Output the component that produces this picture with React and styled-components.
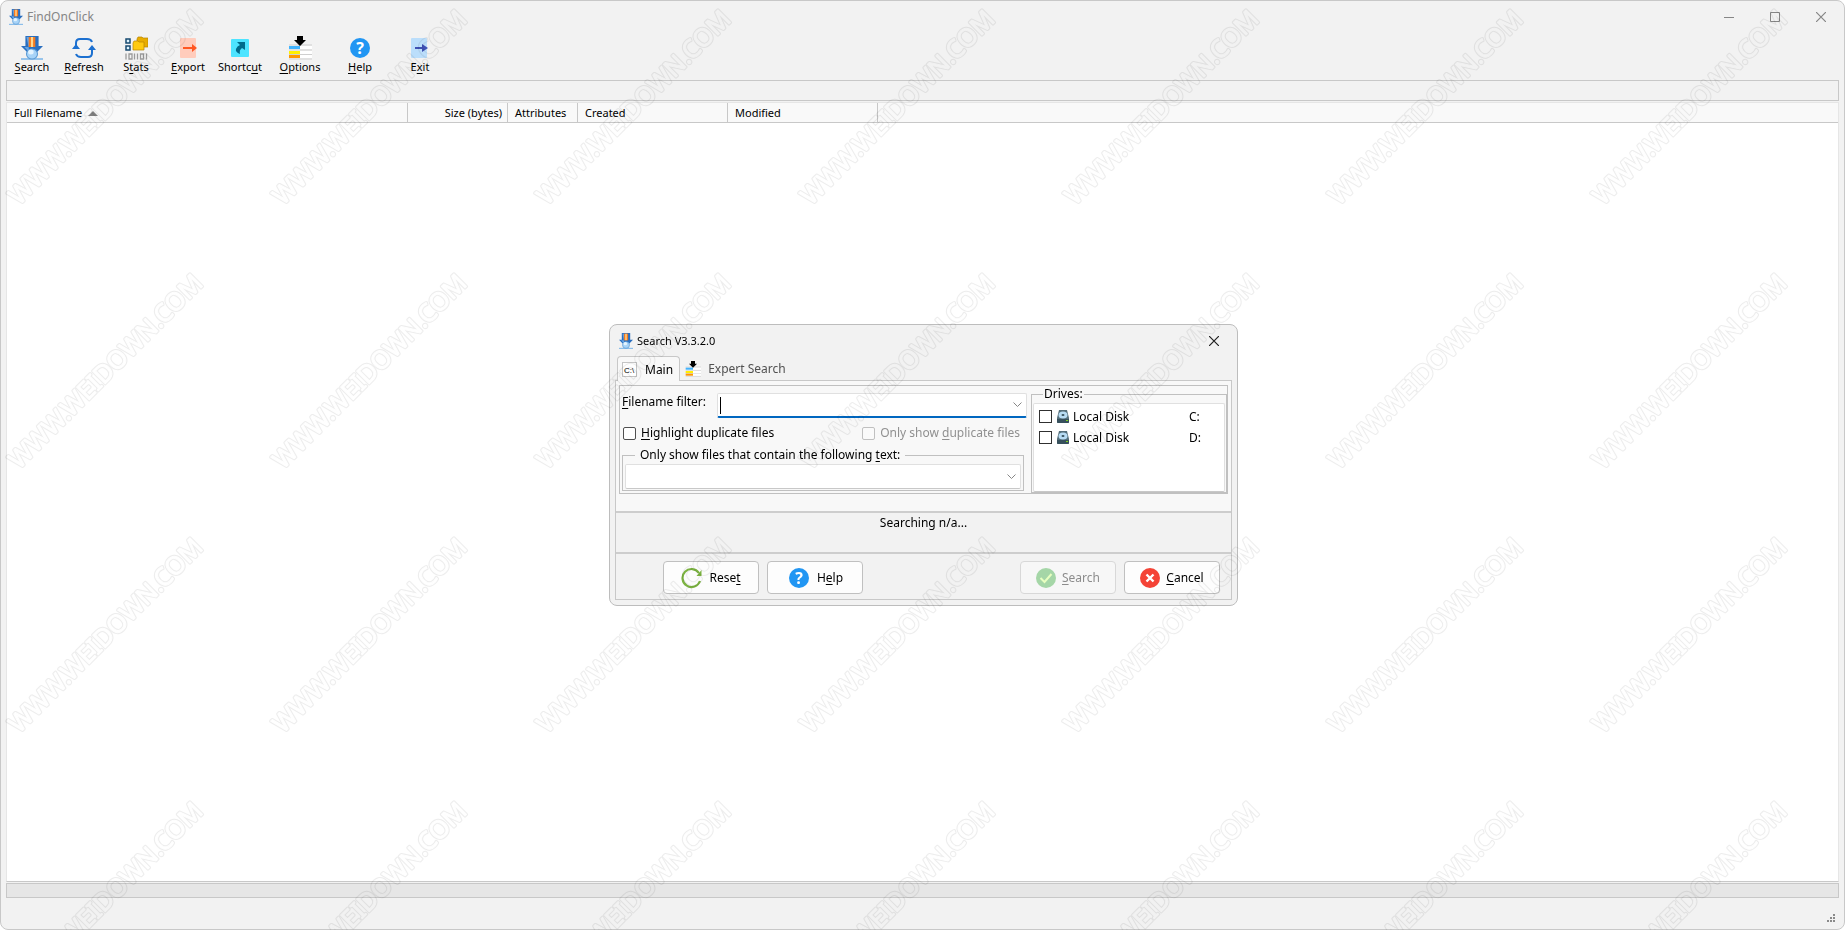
import React from "react";
import styled, { createGlobalStyle } from "styled-components";

const GlobalStyle = createGlobalStyle`
  * {
    box-sizing: border-box;
  }
  body {
    margin: 0;
    background: #fff;
    color: #000;
    font-family: "Noto Sans", "Open Sans", sans-serif;
    font-size: 11px;
    line-height: 16px;
  }
  button, input {
    font: inherit;
    color: inherit;
    margin: 0;
    padding: 0;
  }
  svg {
    display: block;
    flex: none;
  }
  u {
    text-underline-offset: 2px;
    text-decoration-skip-ink: none;
  }
`;

const Window = styled.main`
  display: flex;
  flex-direction: column;
  min-height: 100vh;
  padding: 0 5px;
  border: 1px solid #c8c8c8;
  border-radius: 8px;
  background: #f2f2f2;
`;

const TitleBar = styled.header`
  display: flex;
  align-items: center;
  justify-content: space-between;
  height: 31px;
  margin-right: -5px;
  padding-left: 3px;
  color: #868686;
`;

const AppTitle = styled.h1`
  display: flex;
  align-items: center;
  gap: 4px;
  margin: 0;
  font-size: 12px;
  font-weight: 400;
`;

const WindowButtons = styled.div`
  display: flex;
`;

const WindowButton = styled.button`
  display: flex;
  align-items: center;
  justify-content: center;
  width: 46px;
  height: 30px;
  border: 0;
  background: transparent;
  color: ${props => props.$color || "#868686"};
`;

const Toolbar = styled.nav`
  display: flex;
  height: 48px;
`;

const ToolButton = styled.button`
  display: flex;
  flex-direction: column;
  align-items: center;
  width: ${props => (props.$wide ? 60 : 52)}px;
  margin-left: ${props => props.$gap || 0}px;
  padding-top: 4px;
  border: 0;
  background: transparent;
  line-height: 14px;
`;

const PathBar = styled.div`
  height: 21px;
  border: 1px solid #c8c8c8;
`;

const ListView = styled.section`
  flex: 1;
  margin-top: 1px;
  border: 1px solid #e6e6e6;
  border-bottom-color: #c8c8c8;
  background: #fff;
`;

const FileTable = styled.table`
  width: 100%;
  table-layout: fixed;
  border-collapse: separate;
  border-spacing: 0;
  background: #f9f9f9;
`;

const HeadCell = styled.th`
  width: ${props => (props.$width ? `${props.$width}px` : "auto")};
  height: 20px;
  padding: 0 5px 0 7px;
  border-right: ${props => (props.$width ? "1px solid #c8c8c8" : 0)};
  border-bottom: 1px solid #c8c8c8;
  font-weight: 400;
  text-align: ${props => props.$align || "left"};
`;

const SortArrow = styled.span`
  display: inline-block;
  margin-left: 6px;
  border: 5px solid transparent;
  border-top: 0;
  border-bottom-color: #808080;
  vertical-align: 1px;
`;

const ProgressTrack = styled.div`
  height: 15px;
  margin-top: 1px;
  border: 1px solid #c8c8c8;
  background: #e6e6e6;
`;

const StatusBar = styled.footer`
  display: flex;
  align-items: flex-end;
  justify-content: flex-end;
  height: 31px;
  padding: 7px 4px;
`;

const Overlay = styled.div`
  position: fixed;
  inset: 0;
  display: flex;
  align-items: center;
  justify-content: center;
  padding-left: 2px;
`;

const Dialog = styled.section`
  width: 629px;
  padding: 0 5px 5px;
  border: 1px solid #bdbdbd;
  border-radius: 8px;
  background: #f2f2f2;
  font-size: 12px;
  line-height: 18px;
`;

const DialogBar = styled.header`
  display: flex;
  align-items: center;
  justify-content: space-between;
  height: 31px;
  margin-right: -5px;
  padding-left: 4px;
`;

const DialogTitle = styled.h2`
  display: flex;
  align-items: center;
  gap: 4px;
  margin: 0;
  font-size: 11px;
  font-weight: 400;
`;

const Tabs = styled.div`
  display: flex;
  height: 24px;
  padding-left: 2px;
`;

const Tab = styled.button`
  display: flex;
  align-items: center;
  gap: 7px;
  height: ${props => (props.$active ? 25 : 24)}px;
  padding: 1px 6px 0 4px;
  border: 1px solid ${props => (props.$active ? "#c8c8c8" : "transparent")};
  border-bottom: 0;
  border-radius: 4px 4px 0 0;
  background: ${props => (props.$active ? "#f8f8f8" : "transparent")};
  color: ${props => (props.$active ? "#000" : "#505050")};
  z-index: 1;
`;

const Body = styled.div`
  border: 1px solid #c8c8c8;
`;

const TabPanel = styled.div`
  padding: 4px 3px 17px;
  background: #f8f8f8;
`;

const SearchGroup = styled.div`
  display: grid;
  grid-template-columns: 1fr 196px;
  gap: 4px;
  height: 109px;
  border: 1px solid #c0c0c0;
`;

const Fields = styled.div`
  padding: 7px 0 0 2px;
`;

const FilterRow = styled.div`
  display: grid;
  grid-template-columns: 95px 1fr;
  align-items: start;
`;

const Combo = styled.div`
  display: flex;
  align-items: center;
  height: 25px;
  padding: 0 1px 0 2px;
  border: 1px solid #e0e0e0;
  border-bottom: ${props =>
    props.$focused ? "2px solid #0067c0" : "1px solid #c8c8c8"};
  border-radius: 2px;
  background: #fff;
`;

const Caret = styled.span`
  width: 1px;
  height: 17px;
  background: #000;
`;

const ComboInput = styled.input`
  flex: 1;
  min-width: 0;
  border: 0;
  outline: 0;
  background: transparent;
`;

const ComboButton = styled.button`
  display: flex;
  align-items: center;
  justify-content: center;
  width: 16px;
  height: 20px;
  border: 0;
  background: transparent;
`;

const CheckRow = styled.div`
  display: flex;
  justify-content: space-between;
  padding: 6px 7px 0 1px;
`;

const CheckLabel = styled.label`
  display: flex;
  align-items: center;
  gap: 5px;
  color: ${props => (props.$disabled ? "#909090" : "#000")};
`;

const Checkbox = styled.input`
  appearance: none;
  width: 13px;
  height: 13px;
  border: 1px solid #505050;
  border-radius: 2px;
  background: #fff;

  &:disabled {
    border-color: #c0c0c0;
    background: #fafafa;
  }
`;

const TextGroup = styled.fieldset`
  min-width: 0;
  margin: 4px 3px 0 0;
  padding: 0 2px 1px;
  border: 1px solid #c0c0c0;
`;

const Legend = styled.legend`
  height: 18px;
  margin-left: ${props => props.$indent}px;
  padding: 0 ${props => props.$gap}px;
`;

const DriveGroup = styled.fieldset`
  min-width: 0;
  height: 108px;
  margin: -1px 0 0;
  padding: 0 1px;
  border: 1px solid #c0c0c0;
`;

const DriveList = styled.ul`
  height: 89px;
  margin: 0;
  padding: 2px 4px 0 5px;
  border: 1px solid #e0e0e0;
  border-bottom-color: #c8c8c8;
  border-radius: 2px;
  background: #fff;
  list-style: none;
`;

const Drive = styled.label`
  display: grid;
  grid-template-columns: 18px 16px 116px 1fr;
  align-items: center;
  height: 21px;
`;

const DriveCheckbox = styled(Checkbox)`
  border-color: #303030;
  border-radius: 0;
`;

const StatusPanel = styled.div`
  height: 41px;
  padding-top: 1px;
  border-top: 2px solid #cdcdcd;
  text-align: center;
`;

const ButtonPanel = styled.div`
  display: flex;
  gap: 8px;
  height: 47px;
  padding: 7px 11px 0 47px;
  border-top: 2px solid #cdcdcd;
`;

const Spacer = styled.span`
  flex: 1;
`;

const PushButton = styled.button`
  display: flex;
  align-items: center;
  justify-content: center;
  gap: 6px;
  width: 96px;
  height: 33px;
  border: 1px solid #c0c0c0;
  border-radius: 4px;
  background: #fdfdfd;

  &:disabled {
    border-color: #d8d8d8;
    background: #f7f7f7;
    color: #8c8c8c;
  }
`;

const WatermarkLayer = styled.svg`
  position: fixed;
  inset: 0;
  width: 100%;
  height: 100%;
  pointer-events: none;
`;

const AppIcon = ({ width = 14, height = 16 }) => (
  <svg width={width} height={height} viewBox="0 0 20 24" preserveAspectRatio="none">
    <path d="M4 0h12v10h4L10 21 0 10h4z" fill="#2a6fc0" />
    <path d="M5 1h3v10H3l5 6z" fill="#64a4e4" />
    <path d="M7 1h6v10H7z" fill="#f47a20" />
    <path d="M9 1h2v10H9z" fill="#ffd890" />
    <path d="M0 23h20" stroke="#78b4e8" strokeWidth="1.500" />
    <circle cx="10" cy="18" r="5" fill="#a8d4f8" stroke="#5b9bd5" />
    <circle cx="9" cy="16" r="2.500" fill="#e4f4ff" />
  </svg>
);

const RefreshIcon = () => (
  <svg width="24" height="24" viewBox="0 0 24 24" fill="none" stroke="#1c70d0" strokeWidth="2">
    <path d="M4 13V7q0-4 4-4h7q4 0 5 3M20 11v6q0 4-4 4H9q-4 0-5-3" />
    <path d="M4 8l4 5H0zM20 9l4 5h-8z" fill="#1c70d0" stroke="none" />
  </svg>
);

const StatsIcon = () => (
  <svg width="24" height="24" viewBox="0 0 24 24">
    <g fill="#e0f4ff" stroke="#174a70" strokeWidth="1.5">
      <path d="M2 3h4v4H2zM2 10h4v4H2z" />
    </g>
    <path d="M13 3l1-2h4l1 1h5v9H13z" fill="#e8ac00" stroke="#b88400" strokeWidth=".7" />
    <path d="M9 7l1-2h4l1 1h5v8H9z" fill="#ffca10" stroke="#b88400" strokeWidth=".7" />
    <g fill="none" stroke="#9a9a9a" strokeWidth="1.3">
      <path d="M2 17.500v6M10.500 17.500v6M13.500 17.500v6M22.500 17.500v6M5 18h3v5H5zM16.500 18h3v5h-3z" />
    </g>
  </svg>
);

const ExportIcon = () => (
  <svg width="24" height="24" viewBox="0 0 24 24">
    <rect x="4" y="2" width="16" height="20" rx="1" fill="#ffccbc" />
    <path d="M7 11h9V8l5 4-5 4v-3H7z" fill="#ff5722" />
  </svg>
);

const ShortcutIcon = () => (
  <svg width="24" height="24" viewBox="0 0 24 24">
    <rect x="3" y="3" width="18" height="18" rx="1" fill="#4de4ff" />
    <path d="M9 6h8v8l-3-2q-3 2-2 6-5-2-4-5 1-3 4-4z" fill="#006c8c" />
  </svg>
);

const OptionsIcon = ({ size = 24 }) => (
  <svg width={size} height={size} viewBox="0 0 24 24">
    <path d="M1 9h23M1 14h23M1 18.500h23M1 23h23" stroke="#cfcfcf" />
    <path d="M12 10h12v3H12zM12 15h12v3H12zM12 19h12v3H12z" fill="#fff" />
    <path d="M1 10h11v3H1z" fill="#42b4ff" />
    <path d="M1 15h11v3H1z" fill="#fff000" />
    <path d="M1 19h11v3H1z" fill="#ff9800" />
    <path d="M9 0h6v4h3l-6 6-6-6h3z" fill="#000" />
  </svg>
);

const Question = styled.text`
  fill: #fff;
  font-family: "Noto Sans", sans-serif;
  font-size: 16px;
  font-weight: 700;
  text-anchor: middle;
`;

const HelpIcon = () => (
  <svg width="24" height="24" viewBox="0 0 24 24">
    <circle cx="12" cy="12" r="10" fill="#2196f3" />
    <Question x="12" y="18">?</Question>
  </svg>
);

const ExitIcon = () => (
  <svg width="24" height="24" viewBox="0 0 24 24">
    <rect x="3" y="2" width="16" height="20" rx="1" fill="#bbdefb" />
    <path d="M7 11h7V8l6 4-6 4v-3H7z" fill="#3f51b5" />
  </svg>
);

const PromptText = styled.text`
  fill: #000;
  font-family: "Liberation Sans", sans-serif;
  font-size: 8px;
`;

const PromptIcon = () => (
  <svg width="16" height="16" viewBox="0 0 16 16">
    <rect x=".5" y=".5" width="14" height="14" fill="#fff" stroke="#c4c4c4" />
    <PromptText x="2" y="11">C:\</PromptText>
  </svg>
);

const DriveIcon = () => (
  <svg width="12" height="14" viewBox="0 0 12 14">
    <path d="M2 0h8l2 8v4q0 1-1 1H1q-1 0-1-1V8z" fill="#546e7a" />
    <path d="M0 9h12v3q0 1-1 1H1q-1 0-1-1z" fill="#37505c" />
    <ellipse cx="6" cy="5" rx="4.500" ry="3.500" fill="#b8dcf4" />
    <ellipse cx="6" cy="5" rx="1.500" ry="1" fill="#37505c" />
    <path d="M9 10h2v1H9z" fill="#7ed321" />
  </svg>
);

const ResetIcon = () => (
  <svg width="22" height="22" viewBox="0 0 22 22">
    <path d="M18 6A9 9 0 1 0 19 14" fill="none" stroke="#7cb342" strokeWidth="2.200" />
    <path d="M20.500 3v6h-5z" fill="#7cb342" />
  </svg>
);

const OkIcon = () => (
  <svg width="20" height="20" viewBox="0 0 20 20">
    <circle cx="10" cy="10" r="10" fill="#a5d6a7" />
    <path d="M4.500 10l4 4 7-8" fill="none" stroke="#e8ffc0" strokeWidth="2" />
  </svg>
);

const CancelIcon = () => (
  <svg width="20" height="20" viewBox="0 0 20 20">
    <circle cx="10" cy="10" r="10" fill="#f44336" />
    <path d="M6.500 6.500l7 7M13.500 6.500l-7 7" stroke="#fff" strokeWidth="2.400" />
  </svg>
);

const CloseIcon = () => (
  <svg width="10" height="10" viewBox="0 0 10 10" stroke="currentColor" strokeWidth="1.200">
    <path d="M0 0l10 10M10 0L0 10" />
  </svg>
);

const Chevron = () => (
  <svg width="9" height="6" viewBox="0 0 9 6" fill="none" stroke="#868686">
    <path d="M.5 .5l4 4 4-4" />
  </svg>
);

const ResizeGrip = () => (
  <svg width="8" height="8" viewBox="0 0 8 8" fill="#8a8a8a">
    <path d="M6 0h2v2H6zM3 3h2v2H3zM6 3h2v2H6zM0 6h2v2H0zM3 6h2v2H3zM6 6h2v2H6z" />
  </svg>
);

const MarkText = styled.text`
  fill: ${props => props.$color};
  stroke: ${props => props.$color};
  font-family: "Noto Sans", sans-serif;
  font-size: 25px;
  stroke-linejoin: round;
`;

// Only the outline of each letter is tinted, the inside stays clear
const Watermark = () => (
  <WatermarkLayer aria-hidden="true">
    <defs>
      <mask id="outline" maskUnits="userSpaceOnUse" x="-10" y="-40" width="300" height="60">
        <MarkText $color="#fff" strokeWidth="3">WWW.WEIDOWN.COM</MarkText>
        <MarkText $color="#000" strokeWidth="1">WWW.WEIDOWN.COM</MarkText>
      </mask>
      <pattern id="mark" width="264" height="264" patternUnits="userSpaceOnUse">
        <g transform="translate(19 206) rotate(-45)">
          <rect x="-10" y="-40" width="300" height="60" opacity=".07" mask="url(#outline)" />
        </g>
      </pattern>
    </defs>
    <rect width="100%" height="100%" fill="url(#mark)" />
  </WatermarkLayer>
);

const tools = [
  { id: "search", label: <><u>S</u>earch</>, icon: <AppIcon width={22} height={24} /> },
  { id: "refresh", label: <><u>R</u>efresh</>, icon: <RefreshIcon /> },
  { id: "stats", label: <>S<u>t</u>ats</>, icon: <StatsIcon /> },
  { id: "export", label: <><u>E</u>xport</>, icon: <ExportIcon /> },
  { id: "shortcut", label: <>Shortc<u>u</u>t</>, icon: <ShortcutIcon /> },
  { id: "options", label: <><u>O</u>ptions</>, icon: <OptionsIcon />, wide: true, gap: 4 },
  { id: "help", label: <><u>H</u>elp</>, icon: <HelpIcon />, wide: true },
  { id: "exit", label: <>E<u>x</u>it</>, icon: <ExitIcon />, wide: true },
];

const drives = [
  { name: "Local Disk", letter: "C:" },
  { name: "Local Disk", letter: "D:" },
];

const SearchDialog = () => (
  <Overlay>
    <Dialog role="dialog" aria-labelledby="dialog-title">
      <DialogBar>
        <DialogTitle id="dialog-title">
          <AppIcon />
          Search V3.3.2.0
        </DialogTitle>
        <WindowButton aria-label="Close" $color="#202020">
          <CloseIcon />
        </WindowButton>
      </DialogBar>
      <Tabs role="tablist">
        <Tab role="tab" aria-selected="true" $active>
          <PromptIcon />
          Main
        </Tab>
        <Tab role="tab" aria-selected="false">
          <OptionsIcon size={16} />
          Expert Search
        </Tab>
      </Tabs>
      <Body>
        <TabPanel role="tabpanel">
          <SearchGroup>
            <Fields>
              <FilterRow>
                <label htmlFor="filter"><u>F</u>ilename filter:</label>
                <Combo $focused>
                  <Caret />
                  <ComboInput id="filter" />
                  <ComboButton aria-label="Previous filters">
                    <Chevron />
                  </ComboButton>
                </Combo>
              </FilterRow>
              <CheckRow>
                <CheckLabel>
                  <Checkbox type="checkbox" />
                  <span><u>H</u>ighlight duplicate files</span>
                </CheckLabel>
                <CheckLabel $disabled>
                  <Checkbox type="checkbox" disabled />
                  <span>Only show <u>d</u>uplicate files</span>
                </CheckLabel>
              </CheckRow>
              <TextGroup>
                <Legend $indent={10} $gap={5}>
                  <label htmlFor="contains">
                    Only show files that contain the following <u>t</u>ext:
                  </label>
                </Legend>
                <Combo>
                  <ComboInput id="contains" />
                  <ComboButton aria-label="Previous texts">
                    <Chevron />
                  </ComboButton>
                </Combo>
              </TextGroup>
            </Fields>
            <DriveGroup>
              <Legend $indent={10} $gap={1}>Drives:</Legend>
              <DriveList>
                {drives.map(({ name, letter }) => (
                  <li key={letter}>
                    <Drive>
                      <DriveCheckbox type="checkbox" />
                      <DriveIcon />
                      <span>{name}</span>
                      <span>{letter}</span>
                    </Drive>
                  </li>
                ))}
              </DriveList>
            </DriveGroup>
          </SearchGroup>
        </TabPanel>
        <StatusPanel>Searching n/a...</StatusPanel>
        <ButtonPanel>
          <PushButton>
            <ResetIcon />
            <span>Rese<u>t</u></span>
          </PushButton>
          <PushButton>
            <HelpIcon />
            <span>H<u>e</u>lp</span>
          </PushButton>
          <Spacer />
          <PushButton disabled>
            <OkIcon />
            <span><u>S</u>earch</span>
          </PushButton>
          <PushButton>
            <CancelIcon />
            <span><u>C</u>ancel</span>
          </PushButton>
        </ButtonPanel>
      </Body>
    </Dialog>
  </Overlay>
);

const App = () => (
  <>
    <GlobalStyle />
    <Window>
      <TitleBar>
        <AppTitle>
          <AppIcon />
          FindOnClick
        </AppTitle>
        <WindowButtons>
          <WindowButton aria-label="Minimize">
            <svg width="10" height="10" stroke="currentColor"><path d="M0 5.500h10" /></svg>
          </WindowButton>
          <WindowButton aria-label="Maximize">
            <svg width="10" height="10" fill="none" stroke="currentColor">
              <path d="M.5 .5h9v9h-9z" />
            </svg>
          </WindowButton>
          <WindowButton aria-label="Close">
            <CloseIcon />
          </WindowButton>
        </WindowButtons>
      </TitleBar>
      <Toolbar>
        {tools.map(({ id, label, icon, wide, gap }) => (
          <ToolButton key={id} $wide={wide} $gap={gap}>
            {icon}
            <span>{label}</span>
          </ToolButton>
        ))}
      </Toolbar>
      <PathBar />
      <ListView>
        <FileTable>
          <thead>
            <tr>
              <HeadCell $width={401}>
                Full Filename
                <SortArrow />
              </HeadCell>
              <HeadCell $width={100} $align="right">Size (bytes)</HeadCell>
              <HeadCell $width={70}>Attributes</HeadCell>
              <HeadCell $width={150}>Created</HeadCell>
              <HeadCell $width={150}>Modified</HeadCell>
              <HeadCell />
            </tr>
          </thead>
        </FileTable>
      </ListView>
      <ProgressTrack />
      <StatusBar>
        <ResizeGrip />
      </StatusBar>
    </Window>
    <SearchDialog />
    <Watermark />
  </>
);

export default App;
